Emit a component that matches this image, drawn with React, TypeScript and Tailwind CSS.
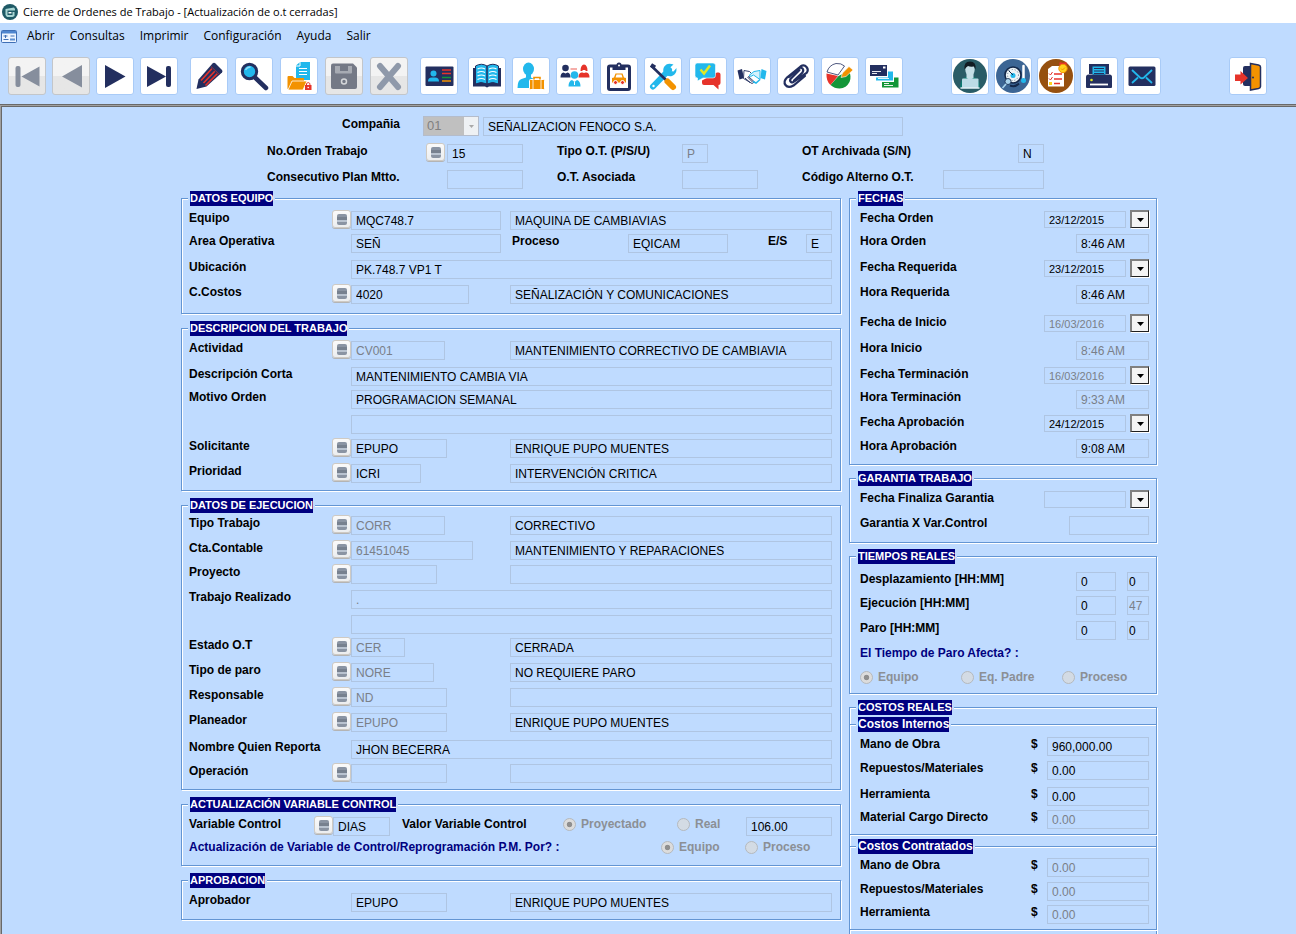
import { useId } from 'react';
import type { ReactNode } from 'react';
import clsx from 'clsx';

const NAVY = '#232f5f';
const CYAN = '#22b8ec';
const RED = '#e6332a';
const ORANGE = '#f39200';
const GREEN = '#139638';
const GRAY = '#868e9d';

interface Tool {
  name: string;
  disabled?: boolean;
  icon: ReactNode;
}

const toolGroups: { spacing: string; tools: Tool[] }[] = [
  {
    spacing: 'ml-2 gap-1.5',
    tools: [
      {
        name: 'Primero',
        disabled: true,
        icon: (
          <g fill={GRAY}>
            <rect x="7.5" y="9" width="5" height="21" rx="2" />
            <path d="M13.5 19.5 31.5 9.5v20z" />
          </g>
        ),
      },
      { name: 'Anterior', disabled: true, icon: <path d="M10 19.5 30 8v22.500z" fill={GRAY} /> },
      { name: 'Siguiente', icon: <path d="M9 8v23l20.500-11.500z" fill={NAVY} /> },
      {
        name: 'Último',
        icon: (
          <g fill={NAVY}>
            <path d="M7 9v21l19-10.500z" />
            <rect x="26" y="9" width="5" height="21" rx="2" />
          </g>
        ),
      },
    ],
  },
  {
    spacing: 'ml-3 gap-[7px]',
    tools: [
      {
        name: 'Editar',
        icon: (
          <g>
            <path d="M6.500 32 8.500 22.500 22.500 6.500q1.500-1.500 3 0L32 13q1 1.200 0 2.500L16.500 29.500z" fill={NAVY} />
            <path d="M11 23.500 23 10.500M13.500 26 26 13M15.500 28.500 28.500 15.500" stroke={RED} strokeWidth="1.600" />
            <path d="M22.500 9.500l7.500 7" stroke={NAVY} strokeWidth="4" />
            <path d="M21 9.500l8.500 8" stroke={RED} strokeWidth=".6" />
          </g>
        ),
      },
      {
        name: 'Buscar',
        icon: (
          <g>
            <path d="M20.500 21 31 31" stroke={NAVY} strokeWidth="4.500" strokeLinecap="round" />
            <circle cx="14.500" cy="14.500" r="7.200" fill={CYAN} stroke={NAVY} strokeWidth="3" />
            <path d="M10.500 13q1.500-3 5-3" stroke="#8fdcf7" strokeWidth="1.500" fill="none" />
          </g>
        ),
      },
      {
        name: 'Abrir documento',
        icon: (
          <g>
            <path d="M16 8.500 20 5h10v18H16z" fill={CYAN} />
            <path d="M16 9h4V5M19 11.500h8M19 14.500h8M19 17.500h8" stroke="#fff" fill="none" />
            <path d="M7.500 32V20q0-1 1-1h4l2 2H24v4" fill={ORANGE} />
            <path d="M8 33 12 24h15l-4 9z" fill={ORANGE} stroke="#fff" strokeWidth=".8" />
            <rect x="25" y="28" width="6.500" height="5" fill={RED} />
            <path d="M26.500 28v-1.500q1.700-2 3.400 0V28" stroke={RED} fill="none" />
            <circle cx="28.200" cy="30.500" r=".8" fill="#fff" />
          </g>
        ),
      },
      {
        name: 'Guardar',
        disabled: true,
        icon: (
          <g>
            <path d="M8 6.500h20l4 4V30q0 2-2 2H8q-2 0-2-2V8.500q0-2 2-2z" fill="#747986" />
            <path d="M10 9h17v6.500q0 1-1 1H11q-1 0-1-1z" fill="#a7abb3" />
            <rect x="15" y="9" width="8" height="5" fill="#747986" />
            <circle cx="19" cy="24.500" r="2.500" fill="none" stroke="#d5d7da" strokeWidth="1.500" />
          </g>
        ),
      },
      {
        name: 'Cancelar',
        disabled: true,
        icon: <path d="M10 9 28 30M28 9 10 30" stroke="#8f99aa" strokeWidth="6" strokeLinecap="round" />,
      },
    ],
  },
  {
    spacing: 'ml-3',
    tools: [
      {
        name: 'Ficha',
        icon: (
          <g>
            <rect x="5.500" y="9.500" width="28" height="19.500" rx="1" fill={NAVY} />
            <circle cx="13.500" cy="16.500" r="3" fill={CYAN} />
            <path d="M8 24.500q0-4 4-4h3q4 0 4 4z" fill={CYAN} />
            <path d="M22 13h9M22 16.500h9" stroke={RED} strokeWidth="1.500" />
            <path d="M22 20.500h9" stroke={GREEN} strokeWidth="1.500" />
            <path d="M22 24h9" stroke={ORANGE} strokeWidth="1.500" />
          </g>
        ),
      },
    ],
  },
  {
    spacing: 'ml-2.5 gap-1.5',
    tools: [
      {
        name: 'Catálogo',
        icon: (
          <g>
            <path d="M5 11h28v18.500H21l-2 1-2-1H5z" fill={NAVY} />
            <path d="M7.500 9q6-3.500 11.500 0v18q-6-3-11.500 0zM19 9q6-3.500 11.500 0v18q-6-3-11.500 0z" fill={CYAN} stroke={NAVY} />
            <path
              d="M9.500 12q4-2 7.500 0M9.500 15.500q4-2 7.500 0M9.500 19q4-2 7.500 0M9.500 22.500q4-2 7.500 0M21 12q4-2 7.500 0M21 15.500q4-2 7.500 0M21 19q4-2 7.500 0M21 22.500q4-2 7.500 0"
              stroke="#fff"
              strokeWidth="1.200"
              fill="none"
            />
          </g>
        ),
      },
      {
        name: 'Empleado',
        icon: (
          <g>
            <ellipse cx="16.500" cy="12" rx="5.500" ry="6.500" fill={CYAN} />
            <path d="M14 17h5v3.500l4 2V31H5.500q0-8 4-9l4.500-1.500z" fill={CYAN} />
            <rect x="17.500" y="22.500" width="15" height="10" rx="1" fill={ORANGE} stroke="#fff" />
            <path d="M22 22.500v-2h6v2" stroke={ORANGE} strokeWidth="1.600" fill="none" />
            <path d="M21 23v9M29 23v9" stroke="#fff" strokeWidth=".8" />
          </g>
        ),
      },
      {
        name: 'Personal',
        icon: (
          <g>
            <circle cx="9.500" cy="11" r="3.300" fill={NAVY} />
            <path d="M4.500 20.500q0-4.500 3-5l2 1 2-1q3 .5 3 5z" fill={NAVY} />
            <path d="M24.500 14q0-6 3.500-6.500 3.500.5 3.500 6.500z" fill={RED} />
            <path d="M22.500 20.500q0-4.500 3-5h5q3 .5 3 5z" fill={RED} />
            <path d="M26.500 13v2l1.500 1 1.500-1v-2z" fill="#fff" />
            <circle cx="18.500" cy="18" r="3.800" fill={CYAN} />
            <path d="M12.500 29.500q0-5.500 3.500-6.500l2.500 2 2.500-2q3.500 1 3.500 6.500z" fill={CYAN} />
            <path d="M18.500 25v3" stroke="#fff" />
            <path d="M14.500 12h6.500" stroke={RED} strokeWidth=".8" />
          </g>
        ),
      },
      {
        name: 'Inspección',
        icon: (
          <g>
            <rect x="8.500" y="9" width="21" height="23.500" rx="1.500" fill="#fff" stroke={NAVY} strokeWidth="3" />
            <path d="M12.500 8h4q0-2.500 2.500-2.500T21.500 8h4v5h-13z" fill={NAVY} />
            <circle cx="19" cy="8.500" r="1" fill="#fff" />
            <path d="M12 25.500v-4.500l2-.5 1.500-4h7l1.500 4 2 .5v4.500z" fill={ORANGE} />
            <path d="M15.500 20.500 16.500 17.500h5l1 3z" fill="#fff" />
            <circle cx="15.500" cy="25.500" r="2" fill={RED} stroke="#fff" />
            <circle cx="22.500" cy="25.500" r="2" fill={RED} stroke="#fff" />
          </g>
        ),
      },
      {
        name: 'Herramientas',
        icon: (
          <g>
            <path d="M9 29.500 25 13" stroke={CYAN} strokeWidth="6" strokeLinecap="round" />
            <path d="M29.500 7.500 25 11.500l1.500 2.500 3 .5L32.500 11q.5 6-4.500 8-4 1-7-2t-1-7q3-5 9.500-2.500z" fill={CYAN} />
            <circle cx="9.500" cy="29" r="1.200" fill="#fff" />
            <path d="M7 8.500 22 23" stroke={NAVY} strokeWidth="2.600" />
            <path d="M7 8 11 10.500" stroke={NAVY} strokeWidth="4" />
            <path d="M23.500 24.500 29 30" stroke={ORANGE} strokeWidth="6" strokeLinecap="round" />
          </g>
        ),
      },
    ],
  },
  {
    spacing: 'ml-[7px] gap-1.5',
    tools: [
      {
        name: 'Mensajes',
        icon: (
          <g>
            <path d="M28 15.500h1.500q2 0 2 2V26q0 2-2 2v4.500L24.500 28H15q-2 0-2-2v-2.500z" fill={RED} />
            <path d="M8 6h16q2.500 0 2.500 2.500v10q0 2.500-2.500 2.500H14l-5.500 3v-3Q6 21 6 18.500v-10Q6 6 8 6z" fill={CYAN} stroke="#fff" strokeWidth=".6" />
            <path d="M11.500 12.500 15 16.500 21 8.500" stroke="#e3e821" strokeWidth="2.500" fill="none" />
          </g>
        ),
      },
      {
        name: 'Convenios',
        icon: (
          <g>
            <path d="M4.500 13.500 9 12l2 9-4.500 1.500z" fill={NAVY} />
            <path d="M11 13.500l5.500 1 3 3-4 2 6 5.500-2.500 1.500-8.500-5z" fill="#fff" stroke={NAVY} strokeWidth=".9" />
            <path d="M12 21l5 4.500M14.500 20l5 5" stroke={NAVY} />
            <path d="M27 13.500l-6 1-5 4q1.500 2 4.500-.5l6.500 4.500z" fill="#d6f1fc" stroke={CYAN} />
            <path d="M20 24.500l3 1.500 4-3.500" stroke={CYAN} strokeWidth="1.500" fill="none" />
            <path d="M28.500 12 33.500 14 32 22.500l-4.500-1.500z" fill={CYAN} />
          </g>
        ),
      },
      {
        name: 'Adjuntos',
        icon: (
          <path
            d="M22.500 13 13.500 22q-1 2 .5 3t3-.5L29.500 16q2.500-3 0-6t-6-.5L10 20.500q-4 4-1.500 7.500t8 .5L28 19M12 20l9.500-8.500q2.500-1.500 4 0t0 4L17 23.500"
            stroke={NAVY}
            strokeWidth="2.200"
            fill="none"
            strokeLinecap="round"
          />
        ),
      },
      {
        name: 'Indicadores',
        icon: (
          <g>
            <path d="M17.500 19l10-5q3.500 5 1 11-3 6-10 6.500-5 0-9-3.500z" fill={GREEN} />
            <path d="M17 19 5.500 16.500Q5 24 9.500 28z" fill={RED} />
            <path d="M17 18 6 15q2-7 9-8.500 5-.5 8.500 2.500z" fill="#fff" stroke={NAVY} strokeWidth=".8" />
            <path d="M20 20.500 21.500 16 28 9.500 32 13 25 19.500z" fill={ORANGE} stroke="#fff" strokeWidth=".6" />
          </g>
        ),
      },
      {
        name: 'Pagos',
        icon: (
          <g>
            <rect x="5" y="8" width="17" height="11" fill={NAVY} />
            <path d="M7 14.500h9M7 16.500h5" stroke="#fff" strokeWidth=".9" />
            <rect x="18" y="9.500" width="2.500" height="2" fill="#fff" />
            <path d="M23 14.500h5v9H11V20.500h12z" fill={CYAN} />
            <path d="M13 21.500h11" stroke="#fff" strokeWidth=".9" />
            <path d="M29 20.500h4.500v10H17v-5.500h12z" fill={GREEN} />
            <path d="M19 26.500h5M19 28.500h9" stroke="#fff" strokeWidth=".9" />
          </g>
        ),
      },
    ],
  },
  {
    spacing: 'ml-12 gap-[5px]',
    tools: [
      {
        name: 'Usuario',
        icon: (
          <g>
            <circle cx="19" cy="19" r="17" fill="#295c66" />
            <path d="M9 30.500q0-9 6-10.500h8q6 1.500 6 10.500z" fill="#0e7a70" />
            <path d="M15.500 16h7v5l-3.500 2-3.500-2z" fill="#c4dfe6" />
            <ellipse cx="19" cy="12.500" rx="4.700" ry="6.500" fill="#c4dfe6" />
            <path d="M13.500 12.500q-1-8 5.500-8t5.500 8l-1.500-3q-4 .5-6-.5-2 1-3.500 3.500z" fill="#111c22" />
            <rect x="11" y="21.500" width="16.500" height="9.500" rx="1" fill="#bcdce6" />
            <path d="M9.500 31h19" stroke="#e6f3f7" strokeWidth="1.500" />
          </g>
        ),
      },
      {
        name: 'Medición',
        icon: (
          <g>
            <circle cx="19" cy="19" r="17" fill="#3c6594" />
            <circle cx="19" cy="18" r="8" fill="#eef3f6" stroke="#14284a" strokeWidth="1.600" />
            <circle cx="19" cy="18" r="5.500" fill="none" stroke="#6c7d90" strokeDasharray="1 2" />
            <circle cx="19" cy="18.500" r="2.500" fill={CYAN} />
            <path d="M19 18 14.500 13.500" stroke="#14284a" />
            <path d="M16 28.500q5 2 9-2" stroke="#14284a" strokeWidth="2" fill="none" />
            <circle cx="14" cy="24.500" r="3" fill="#a8d3ee" stroke="#14284a" strokeWidth=".8" />
            <path d="M12 27 8.500 31" stroke="#a8d3ee" strokeWidth="1.600" />
            <path d="M29.500 9v14" stroke="#fff" strokeWidth="2.500" strokeLinecap="round" />
            <circle cx="29.500" cy="23.500" r="2.500" fill={CYAN} />
          </g>
        ),
      },
      {
        name: 'Lista de tareas',
        icon: (
          <g>
            <circle cx="19" cy="19" r="17" fill="#96500f" />
            <path d="M11 12 15 9h12v20.500H11z" fill="#fff" />
            <path d="M17 17h8M17 22h8M17 26.500h6" stroke={RED} strokeWidth="1.300" />
            <path d="M12 16.500l1.500 1.500 2-3M12 21.500l1.500 1.500 2-3" stroke={RED} fill="none" />
            <rect x="12" y="25" width="3" height="3" fill="#ffd21f" />
            <path d="M22.500 6l7 2M29.500 6l-7 2" stroke={RED} strokeWidth="2" />
            <circle cx="26" cy="11.500" r="4.200" fill="#ffd21f" stroke={ORANGE} />
            <path d="M24 11.500l1.500 1.500 2.500-2.500" stroke={ORANGE} fill="none" />
          </g>
        ),
      },
      {
        name: 'Imprimir reporte',
        icon: (
          <g>
            <path d="M9 7h20v10H9z" fill={NAVY} />
            <path d="M12.500 9.500h13v8.500h-13z" fill={CYAN} />
            <path d="M14 11.500h10M14 14h10M14 16.500h10" stroke={NAVY} />
            <path d="M8.500 17.500h21q2.500 0 2.500 2.500v10q0 1-1 1H7q-1 0-1-1V20q0-2.500 2.500-2.500z" fill={NAVY} />
            <path d="M10 27.500h18" stroke="#fff" strokeWidth="1.800" />
            <circle cx="11.500" cy="23" r="1.300" fill="#e3e821" />
          </g>
        ),
      },
      {
        name: 'Correo',
        icon: (
          <g>
            <rect x="5.500" y="9.500" width="27" height="19.500" rx="1.500" fill={NAVY} />
            <path d="M9 13 17 20.500q2 1.500 4 0L29 13M9 26l6-5.500M29 26l-6-5.500" stroke={CYAN} strokeWidth="1.800" fill="none" />
          </g>
        ),
      },
    ],
  },
  {
    spacing: 'ml-auto',
    tools: [
      {
        name: 'Cerrar sesión',
        icon: (
          <g>
            <rect x="14" y="9" width="9" height="20" rx="2" fill={NAVY} />
            <path d="M21.500 6.500 29.500 8q2 .5 2 2v19.500q0 1.500-2 2L21.500 33z" fill={ORANGE} stroke={NAVY} strokeWidth="1.500" />
            <circle cx="24" cy="20.500" r="1" fill={NAVY} />
            <path d="M6 17.500h5.500V14l7.500 7-7.500 6.500V24H6z" fill={RED} />
          </g>
        ),
      },
    ],
  },
];

const menuItems = ['Abrir', 'Consultas', 'Imprimir', 'Configuración', 'Ayuda', 'Salir'];

function ToolButton({ tool }: { tool: Tool }) {
  return (
    <button
      title={tool.name}
      aria-label={tool.name}
      disabled={tool.disabled}
      className={clsx(
        'h-[38px] w-[38px] shrink-0 rounded-[3px] border',
        tool.disabled
          ? 'border-[#c3c6ca] bg-linear-to-b from-[#f3f3f3] from-50% to-[#e6e6e6] to-50%'
          : 'border-[#a9cbf7] bg-white'
      )}
    >
      <svg viewBox="1 1 36 36" className="h-9 w-9" fill="none">
        {tool.icon}
      </svg>
    </button>
  );
}

interface FieldProps {
  id?: string;
  label?: string;
  value?: string;
  muted?: boolean;
  className?: string;
}

function Field({ id, label, value = '', muted, className }: FieldProps) {
  return (
    <input
      id={id}
      type="text"
      aria-label={label}
      defaultValue={value}
      readOnly
      className={clsx(
        'h-[19px] min-w-0 border border-[#afc5e2] bg-transparent pt-px outline-none',
        muted ? 'text-[#7a7f88]' : 'text-black',
        className
      )}
    />
  );
}

function Label({ id, className, children }: { id?: string; className?: string; children: ReactNode }) {
  return (
    <label htmlFor={id} className={clsx('shrink-0 font-bold whitespace-nowrap', className)}>
      {children}
    </label>
  );
}

function LookupButton({ label }: { label: string }) {
  return (
    <button
      aria-label={`Buscar ${label}`}
      className="-mt-px flex h-[18px] w-[19px] shrink-0 items-center justify-center rounded-[3px] border border-[#cfcac3] bg-linear-to-b from-[#fafafa] to-[#eceef0] shadow-[0_1px_0_#b4b4b4]"
    >
      <svg viewBox="0 0 10 11" className="h-[11px] w-[10px]">
        <rect width="10" height="11" rx="2" fill="#8a94a3" />
        <path d="M0 3h10v3H0z" fill="#77818f" />
        <path d="M0 6h10v2H0z" fill="#b9c3d0" />
      </svg>
    </button>
  );
}

function Radio({ name, label, checked, className }: { name: string; label: string; checked?: boolean; className?: string }) {
  return (
    <label className={clsx('flex items-center gap-[5px] font-bold whitespace-nowrap text-[#8b8f95]', className)}>
      <input
        type="radio"
        name={name}
        defaultChecked={checked}
        disabled
        className="h-[13px] w-[13px] appearance-none rounded-full border border-[#b5b9bd] bg-[#d3dbe4] checked:bg-radial checked:from-[#8f8f8f] checked:from-30% checked:to-[#dcdcdc] checked:to-40%"
      />
      {label}
    </label>
  );
}

function Panel({ title, titleSize = 'text-[11px]', className, children }: { title: string; titleSize?: string; className?: string; children: ReactNode }) {
  return (
    <fieldset
      className={clsx(
        'min-w-0 border border-[#6395d3] shadow-[1px_1px_0_#fff,inset_1px_1px_0_#fff]',
        className
      )}
    >
      <legend className="ml-1.5 border-x-2 border-[#bfdbff]">
        <span className={clsx('block h-[15px] bg-[#000080] leading-[15px] font-bold text-white', titleSize)}>{title}</span>
      </legend>
      {children}
    </fieldset>
  );
}

interface Entry {
  label?: string;
  height: string;
  lookup?: boolean;
  value?: string;
  width?: string;
  muted?: boolean;
  description?: string;
}

// Entries with no width take up the whole line
function EntryRow({ entry }: { entry: Entry }) {
  const id = useId();
  const { label, height, lookup, value, width, muted, description } = entry;
  return (
    <div className={clsx('flex items-start pr-2 pl-[7px]', height)}>
      <Label id={id} className="w-[143px]">{label}</Label>
      <div className="w-[19px] shrink-0">{lookup && <LookupButton label={label ?? ''} />}</div>
      {width ? (
        <>
          <div className="flex w-[159px] shrink-0">
            <Field id={id} value={value} muted={muted} className={clsx('pl-1', width)} />
          </div>
          <Field label={`${label}: descripción`} value={description} className="flex-1 pl-1" />
        </>
      ) : (
        <Field id={id} value={value} muted={muted} className="flex-1 pl-1" />
      )}
    </div>
  );
}

const workEntries: Entry[] = [
  { label: 'Actividad', height: 'h-[26px]', lookup: true, value: 'CV001', width: 'w-[94px]', muted: true, description: 'MANTENIMIENTO CORRECTIVO DE CAMBIAVIA' },
  { label: 'Descripción Corta', height: 'h-[23px]', value: 'MANTENIMIENTO CAMBIA VIA' },
  { label: 'Motivo Orden', height: 'h-[25px]', value: 'PROGRAMACION SEMANAL' },
  { height: 'h-6' },
  { label: 'Solicitante', height: 'h-[25px]', lookup: true, value: 'EPUPO', width: 'w-24', description: 'ENRIQUE PUPO MUENTES' },
  { label: 'Prioridad', height: 'h-[26px]', lookup: true, value: 'ICRI', width: 'w-[70px]', description: 'INTERVENCIÓN CRITICA' },
];

const executionEntries: Entry[] = [
  { label: 'Tipo Trabajo', height: 'h-[25px]', lookup: true, value: 'CORR', width: 'w-[94px]', muted: true, description: 'CORRECTIVO' },
  { label: 'Cta.Contable', height: 'h-6', lookup: true, value: '61451045', width: 'w-[122px]', muted: true, description: 'MANTENIMIENTO Y REPARACIONES' },
  { label: 'Proyecto', height: 'h-[25px]', lookup: true, width: 'w-[86px]' },
  { label: 'Trabajo Realizado', height: 'h-[25px]', value: '.', muted: true },
  { height: 'h-[23px]' },
  { label: 'Estado O.T', height: 'h-[25px]', lookup: true, value: 'CER', width: 'w-[54px]', muted: true, description: 'CERRADA' },
  { label: 'Tipo de paro', height: 'h-[25px]', lookup: true, value: 'NORE', width: 'w-[83px]', muted: true, description: 'NO REQUIERE PARO' },
  { label: 'Responsable', height: 'h-[25px]', lookup: true, value: 'ND', width: 'w-24', muted: true },
  { label: 'Planeador', height: 'h-[27px]', lookup: true, value: 'EPUPO', width: 'w-24', muted: true, description: 'ENRIQUE PUPO MUENTES' },
  { label: 'Nombre Quien Reporta', height: 'h-6', value: 'JHON BECERRA' },
  { label: 'Operación', height: 'h-6', lookup: true, width: 'w-24' },
];

interface Moment {
  label: string;
  height: string;
  value?: string;
  date?: boolean;
  muted?: boolean;
  width?: string;
}

const dateEntries: Moment[] = [
  { label: 'Fecha Orden', height: 'h-[23px]', value: '23/12/2015', date: true },
  { label: 'Hora Orden', height: 'h-[26px]', value: '8:46 AM' },
  { label: 'Fecha Requerida', height: 'h-[25px]', value: '23/12/2015', date: true },
  { label: 'Hora Requerida', height: 'h-[30px]', value: '8:46 AM' },
  { label: 'Fecha de Inicio', height: 'h-[26px]', value: '16/03/2016', date: true, muted: true },
  { label: 'Hora Inicio', height: 'h-[26px]', value: '8:46 AM', muted: true },
  { label: 'Fecha Terminación', height: 'h-[23px]', value: '16/03/2016', date: true, muted: true },
  { label: 'Hora Terminación', height: 'h-[25px]', value: '9:33 AM', muted: true },
  { label: 'Fecha Aprobación', height: 'h-6', value: '24/12/2015', date: true },
  { label: 'Hora Aprobación', height: 'h-[25px]', value: '9:08 AM' },
];

const warrantyEntries: Moment[] = [
  { label: 'Fecha Finaliza Garantia', height: 'h-[25px]', date: true },
  { label: 'Garantia X Var.Control', height: 'h-[26px]', width: 'w-20' },
];

function MomentRow({ entry }: { entry: Moment }) {
  const id = useId();
  const { label, height, value, date, muted, width = 'w-[73px]' } = entry;
  return (
    <div className={clsx('flex items-start pr-[7px] pl-2.5', height)}>
      <Label id={id} className="mr-auto">{label}</Label>
      {date ? (
        <>
          <input
            id={id}
            type="text"
            defaultValue={value}
            readOnly
            className={clsx(
              'mr-1 h-[17px] w-[82px] border border-[#afc5e2] bg-transparent pl-1 text-[11px] outline-none',
              muted ? 'text-[#7a7f88]' : 'text-black'
            )}
          />
          <button
            aria-label={`Elegir ${label}`}
            className="-mt-px flex h-[18px] w-[19px] items-center justify-center border-t-2 border-r border-b border-l-2 border-t-[#808080] border-r-[#202020] border-b-[#202020] border-l-[#808080] bg-[#f4f4f4] shadow-[1px_1px_0_#fff]"
          >
            <svg viewBox="0 0 7 4" className="h-1 w-[7px]">
              <path d="M0 0h7L3.500 4z" fill="#000" />
            </svg>
          </button>
        </>
      ) : (
        <Field id={id} value={value} muted={muted} className={clsx('pl-1', width)} />
      )}
    </div>
  );
}

const timeEntries = [
  { label: 'Desplazamiento [HH:MM]', height: 'h-6', hours: '0', minutes: '0' },
  { label: 'Ejecución [HH:MM]', height: 'h-[25px]', hours: '0', minutes: '47', muted: true },
  { label: 'Paro [HH:MM]', height: 'h-[25px]', hours: '0', minutes: '0' },
];

interface Cost {
  label: string;
  height: string;
  value: string;
  muted?: boolean;
}

const internalCosts: Cost[] = [
  { label: 'Mano de Obra', height: 'h-6', value: '960,000.00' },
  { label: 'Repuestos/Materiales', height: 'h-[26px]', value: '0.00' },
  { label: 'Herramienta', height: 'h-[23px]', value: '0.00' },
  { label: 'Material Cargo Directo', height: 'h-6', value: '0.00', muted: true },
];

const contractedCosts: Cost[] = [
  { label: 'Mano de Obra', height: 'h-6', value: '0.00', muted: true },
  { label: 'Repuestos/Materiales', height: 'h-[23px]', value: '0.00', muted: true },
  { label: 'Herramienta', height: 'h-6', value: '0.00', muted: true },
];

function CostRow({ cost }: { cost: Cost }) {
  const id = useId();
  return (
    <div className={clsx('flex items-start pr-[7px] pl-2.5', cost.height)}>
      <Label id={id} className="mr-auto">{cost.label}</Label>
      <span className="w-4 font-bold">$</span>
      <Field id={id} value={cost.value} muted={cost.muted} className="w-[102px] pl-1" />
    </div>
  );
}

function OrderHeader() {
  return (
    <div className="pl-[86px]">
      <div className="flex h-[27px] items-start pl-[75px]">
        <Label id="company" className="w-[81px]">Compañia</Label>
        <div className="relative -mt-px mr-1 flex">
          <select
            id="company"
            disabled
            className="h-5 w-14 appearance-none border border-[#b4bccb] bg-[#c0c0c0] pl-[3px] text-[13px] text-[#808080] opacity-100"
          >
            <option>01</option>
          </select>
          <span className="pointer-events-none absolute top-px right-px flex h-[18px] w-3.5 items-center justify-center bg-[#eef1f4]">
            <svg viewBox="0 0 5 3" className="h-[3px] w-[5px]">
              <path d="M0 0h5L2.500 3z" fill="#a8a8a8" />
            </svg>
          </span>
        </div>
        <Field label="Nombre compañia" value="SEÑALIZACION FENOCO S.A." className="w-[420px] pl-1" />
      </div>
      <div className="flex h-[26px] items-start">
        <Label id="order" className="w-[159px]">No.Orden Trabajo</Label>
        <LookupButton label="No.Orden Trabajo" />
        <Field id="order" value="15" className="mr-[34px] ml-0.5 w-[76px] pl-1" />
        <Label id="kind" className="w-[125px]">Tipo O.T. (P/S/U)</Label>
        <Field id="kind" value="P" muted className="mr-[94px] w-[26px] pl-1" />
        <Label id="archived" className="w-[216px]">OT Archivada (S/N)</Label>
        <Field id="archived" value="N" className="w-[26px] pl-1" />
      </div>
      <div className="flex h-[21px] items-start">
        <Label id="plan" className="w-[180px]">Consecutivo Plan Mtto.</Label>
        <Field id="plan" className="mr-[34px] w-[76px]" />
        <Label id="linked" className="w-[125px]">O.T. Asociada</Label>
        <Field id="linked" className="mr-11 w-[76px]" />
        <Label id="alternate" className="w-[141px]">Código Alterno O.T.</Label>
        <Field id="alternate" className="w-[101px]" />
      </div>
    </div>
  );
}

export default function App() {
  return (
    <div className="flex h-screen flex-col overflow-hidden bg-[#bfdbff] font-['Liberation_Sans',Arial,sans-serif] text-xs leading-[14px] text-black">
      <header className="font-['Open_Sans','Noto_Sans',sans-serif]">
        <div className="flex h-[23px] items-center gap-[5px] bg-white pl-0.5">
          <svg viewBox="0 0 16 16" className="h-4 w-4">
            <circle cx="8" cy="8" r="8" fill="#1f5a66" />
            <path d="M3.500 5 12 3.500 13 5v1.500H5.500V11h5V8h2v4l-2 1H5l-1.500-2z" fill="#a9d6d4" />
            <path d="M6.500 8h3v1.500h-3z" fill="#fff" />
          </svg>
          <h1 className="text-[11px]">Cierre de Ordenes de Trabajo - [Actualización de o.t cerradas]</h1>
        </div>
        <nav className="flex h-[26px] items-center pl-px">
          <svg viewBox="0 0 16 13" className="h-[13px] w-4">
            <rect x=".5" y=".5" width="15" height="12" rx="1" fill="#eef5ff" stroke="#3f6fb5" />
            <path d="M1 1h14v2.500H1z" fill="#4f86d0" />
            <path d="M2.500 6h4M4.500 5v3M2.500 9.500h5M9.500 6h4" stroke="#3f6fb5" />
            <rect x="9" y="8.500" width="5" height="2" fill="#5d8fd2" />
          </svg>
          <ul className="ml-2.5 flex gap-[15px]">
            {menuItems.map((item) => (
              <li key={item}>
                <a href="#">{item}</a>
              </li>
            ))}
          </ul>
        </nav>
      </header>

      <div role="toolbar" className="flex h-14 shrink-0 border-b border-[#696969] pt-2 pr-[29px]">
        {toolGroups.map((group) => (
          <div key={group.tools[0].name} className={clsx('flex', group.spacing)}>
            {group.tools.map((tool) => (
              <ToolButton key={tool.name} tool={tool} />
            ))}
          </div>
        ))}
      </div>

      <main className="min-h-0 flex-1 border-t border-l border-[#a0a0a0] pt-[11px] pr-[139px] pl-[180px] shadow-[inset_1px_1px_0_#696969]">
        <OrderHeader />
        <div className="grid grid-cols-[minmax(0,660fr)_minmax(0,308fr)] items-start gap-2">
          <div className="flex flex-col gap-[7px]">
            <Panel title="DATOS EQUIPO">
              <div className="pt-[5px] pb-px">
                <EntryRow
                  entry={{ label: 'Equipo', height: 'h-[23px]', lookup: true, value: 'MQC748.7', width: 'w-[150px]', description: 'MAQUINA DE CAMBIAVIAS' }}
                />
                <div className="flex h-[26px] items-start pr-2 pl-[7px]">
                  <Label id="area" className="w-[162px]">Area Operativa</Label>
                  <Field id="area" value="SEÑ" className="mr-[11px] w-[150px] pl-1" />
                  <Label id="process" className="w-[116px]">Proceso</Label>
                  <Field id="process" value="EQICAM" className="mr-auto w-[100px] pl-1" />
                  <Label id="io" className="w-[38px]">E/S</Label>
                  <Field id="io" value="E" className="w-[26px] pl-1" />
                </div>
                <EntryRow entry={{ label: 'Ubicación', height: 'h-[25px]', value: 'PK.748.7 VP1 T' }} />
                <EntryRow
                  entry={{ label: 'C.Costos', height: 'h-[27px]', lookup: true, value: '4020', width: 'w-[118px]', description: 'SEÑALIZACIÓN Y COMUNICACIONES' }}
                />
              </div>
            </Panel>

            <Panel title="DESCRIPCION DEL TRABAJO">
              <div className="pt-[5px]">
                {workEntries.map((entry, i) => (
                  <EntryRow key={i} entry={entry} />
                ))}
              </div>
            </Panel>

            <Panel title="DATOS DE EJECUCION">
              <div className="pt-[3px] pb-px">
                {executionEntries.map((entry, i) => (
                  <EntryRow key={i} entry={entry} />
                ))}
              </div>
            </Panel>

            <Panel title="ACTUALIZACIÓN VARIABLE CONTROL">
              <div className="pt-[5px]">
                <div className="flex h-[23px] items-start pr-2 pl-[7px]">
                  <Label id="variable" className="w-[125px]">Variable Control</Label>
                  <LookupButton label="Variable Control" />
                  <Field id="variable" value="DIAS" className="mr-3 w-[57px] pl-1" />
                  <Label id="variable-value" className="w-[161px]">Valor Variable Control</Label>
                  <Radio name="source" label="Proyectado" checked className="w-[114px]" />
                  <Radio name="source" label="Real" className="mr-auto" />
                  <Field id="variable-value" value="106.00" className="w-[86px] pl-1" />
                </div>
                <div className="flex h-[25px] items-start pr-2 pl-[7px]">
                  <span className="mr-auto font-bold text-[#000080]">
                    Actualización de Variable de Control/Reprogramación P.M. Por? :
                  </span>
                  <Radio name="update-by" label="Equipo" checked className="w-[84px]" />
                  <Radio name="update-by" label="Proceso" className="w-[87px]" />
                </div>
              </div>
            </Panel>

            <Panel title="APROBACION">
              <div className="pt-[5px]">
                <EntryRow
                  entry={{ label: 'Aprobador', height: 'h-[26px]', value: 'EPUPO', width: 'w-24', description: 'ENRIQUE PUPO MUENTES' }}
                />
              </div>
            </Panel>
          </div>

          <div className="flex flex-col gap-1.5">
            <Panel title="FECHAS">
              <div className="pt-[5px]">
                {dateEntries.map((entry) => (
                  <MomentRow key={entry.label} entry={entry} />
                ))}
              </div>
            </Panel>

            <Panel title="GARANTIA TRABAJO">
              <div className="pt-[5px]">
                {warrantyEntries.map((entry) => (
                  <MomentRow key={entry.label} entry={entry} />
                ))}
              </div>
            </Panel>

            <Panel title="TIEMPOS REALES">
              <div className="pt-2">
                {timeEntries.map((entry) => (
                  <div key={entry.label} className={clsx('flex items-start pr-[7px] pl-2.5', entry.height)}>
                    <Label id={entry.label} className="mr-auto">{entry.label}</Label>
                    <Field id={entry.label} value={entry.hours} className="mr-[11px] w-10 pl-1" />
                    <Field label={`${entry.label} minutos`} value={entry.minutes} muted={entry.muted} className="w-[22px] pl-px" />
                  </div>
                ))}
                <p className="h-6 pl-2.5 font-bold text-[#000080]">El Tiempo de Paro Afecta? :</p>
                <div className="grid h-[23px] grid-cols-[101px_101px_1fr] items-start pl-2.5">
                  <Radio name="stop" label="Equipo" checked />
                  <Radio name="stop" label="Eq. Padre" />
                  <Radio name="stop" label="Proceso" />
                </div>
              </div>
            </Panel>

            <Panel title="COSTOS REALES" className="pb-6">
              <Panel title="Costos Internos" titleSize="text-xs" className="-mx-px mt-0.5">
                <div className="pt-[5px]">
                  {internalCosts.map((cost) => (
                    <CostRow key={cost.label} cost={cost} />
                  ))}
                </div>
              </Panel>
              <Panel title="Costos Contratados" titleSize="text-xs" className="-mx-px mt-1">
                <div className="pt-1">
                  {contractedCosts.map((cost) => (
                    <CostRow key={cost.label} cost={cost} />
                  ))}
                </div>
              </Panel>
            </Panel>
          </div>
        </div>
      </main>
    </div>
  );
}
